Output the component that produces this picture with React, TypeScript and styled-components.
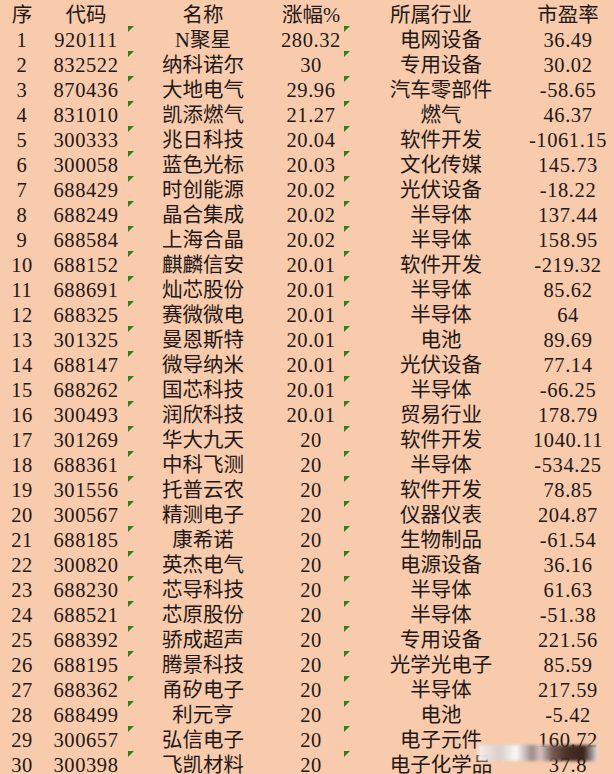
import styled, { createGlobalStyle } from "styled-components";

const GlobalStyle = createGlobalStyle`
  html, body {
    margin: 0;
    padding: 0;
    background: #f8cbad;
  }
  body {
    font-family: "Liberation Serif", "Noto Sans CJK SC", serif;
    color: #231815;
  }
`;

const Sheet = styled.div`
  position: relative;
  width: 614px;
  height: 774px;
  overflow: hidden;
  background: #f8cbad;
`;

const Row = styled.div`
  display: grid;
  grid-template-columns: 44px 84px 150px 66px 194px 60px;
  height: 25px;
`;

const Cell = styled.div<{ $flag?: boolean; $nudge?: number }>`
  position: relative;
  display: flex;
  justify-content: center;
  align-items: center;
  white-space: nowrap;
  box-sizing: border-box;
  height: 25px;
  padding-top: 5px;
  padding-right: ${(p) => (p.$nudge ? `${p.$nudge}px` : "0")};
  font-size: 20.5px;
  line-height: 20px;

  &::before {
    content: "";
    display: ${(p) => (p.$flag ? "block" : "none")};
    position: absolute;
    top: 1px;
    left: 0;
    width: 0;
    height: 0;
    border-top: 6px solid #2a8218;
    border-right: 6px solid transparent;
  }
`;

const Num = styled.span`
  letter-spacing: 0.6px;
`;

const Watermark = styled.div`
  position: absolute;
  left: 478px;
  top: 745px;
  width: 120px;
  height: 16px;
  filter: blur(1.4px);
  background: linear-gradient(
    90deg,
    rgba(245, 240, 240, 0.95) 0%,
    rgba(215, 205, 205, 0.95) 18%,
    rgba(250, 250, 250, 0.95) 32%,
    rgba(150, 135, 135, 0.95) 45%,
    rgba(210, 195, 195, 0.95) 52%,
    rgba(110, 85, 80, 0.95) 62%,
    rgba(60, 35, 30, 0.95) 75%,
    rgba(45, 25, 20, 0.95) 88%,
    rgba(235, 230, 230, 0.95) 100%
  );
`;

type Stock = [string, string, string, string, string];

const stocks: Stock[] = [
  ["920111", "N聚星", "280.32", "电网设备", "36.49"],
  ["832522", "纳科诺尔", "30", "专用设备", "30.02"],
  ["870436", "大地电气", "29.96", "汽车零部件", "-58.65"],
  ["831010", "凯添燃气", "21.27", "燃气", "46.37"],
  ["300333", "兆日科技", "20.04", "软件开发", "-1061.15"],
  ["300058", "蓝色光标", "20.03", "文化传媒", "145.73"],
  ["688429", "时创能源", "20.02", "光伏设备", "-18.22"],
  ["688249", "晶合集成", "20.02", "半导体", "137.44"],
  ["688584", "上海合晶", "20.02", "半导体", "158.95"],
  ["688152", "麒麟信安", "20.01", "软件开发", "-219.32"],
  ["688691", "灿芯股份", "20.01", "半导体", "85.62"],
  ["688325", "赛微微电", "20.01", "半导体", "64"],
  ["301325", "曼恩斯特", "20.01", "电池", "89.69"],
  ["688147", "微导纳米", "20.01", "光伏设备", "77.14"],
  ["688262", "国芯科技", "20.01", "半导体", "-66.25"],
  ["300493", "润欣科技", "20.01", "贸易行业", "178.79"],
  ["301269", "华大九天", "20", "软件开发", "1040.11"],
  ["688361", "中科飞测", "20", "半导体", "-534.25"],
  ["301556", "托普云农", "20", "软件开发", "78.85"],
  ["300567", "精测电子", "20", "仪器仪表", "204.87"],
  ["688185", "康希诺", "20", "生物制品", "-61.54"],
  ["300820", "英杰电气", "20", "电源设备", "36.16"],
  ["688230", "芯导科技", "20", "半导体", "61.63"],
  ["688521", "芯原股份", "20", "半导体", "-51.38"],
  ["688392", "骄成超声", "20", "专用设备", "221.56"],
  ["688195", "腾景科技", "20", "光学光电子", "85.59"],
  ["688362", "甬矽电子", "20", "半导体", "217.59"],
  ["688499", "利元亨", "20", "电池", "-5.42"],
  ["300657", "弘信电子", "20", "电子元件", "160.72"],
  ["300398", "飞凯材料", "20", "电子化学品", "37.8"],
];

export default function App() {
  return (
    <>
      <GlobalStyle />
      <Sheet>
        <Row>
          <Cell>序</Cell>
          <Cell>代码</Cell>
          <Cell>名称</Cell>
          <Cell>涨幅%</Cell>
          <Cell $nudge={20}>所属行业</Cell>
          <Cell>市盈率</Cell>
        </Row>
        {stocks.map(([code, name, change, industry, pe], i) => (
          <Row key={code}>
            <Cell>
              <Num>{i + 1}</Num>
            </Cell>
            <Cell>
              <Num>{code}</Num>
            </Cell>
            <Cell $flag>{name}</Cell>
            <Cell>
              <Num>{change}</Num>
            </Cell>
            <Cell $flag>{industry}</Cell>
            <Cell>
              <Num>{pe}</Num>
            </Cell>
          </Row>
        ))}
        <Watermark />
      </Sheet>
    </>
  );
}
